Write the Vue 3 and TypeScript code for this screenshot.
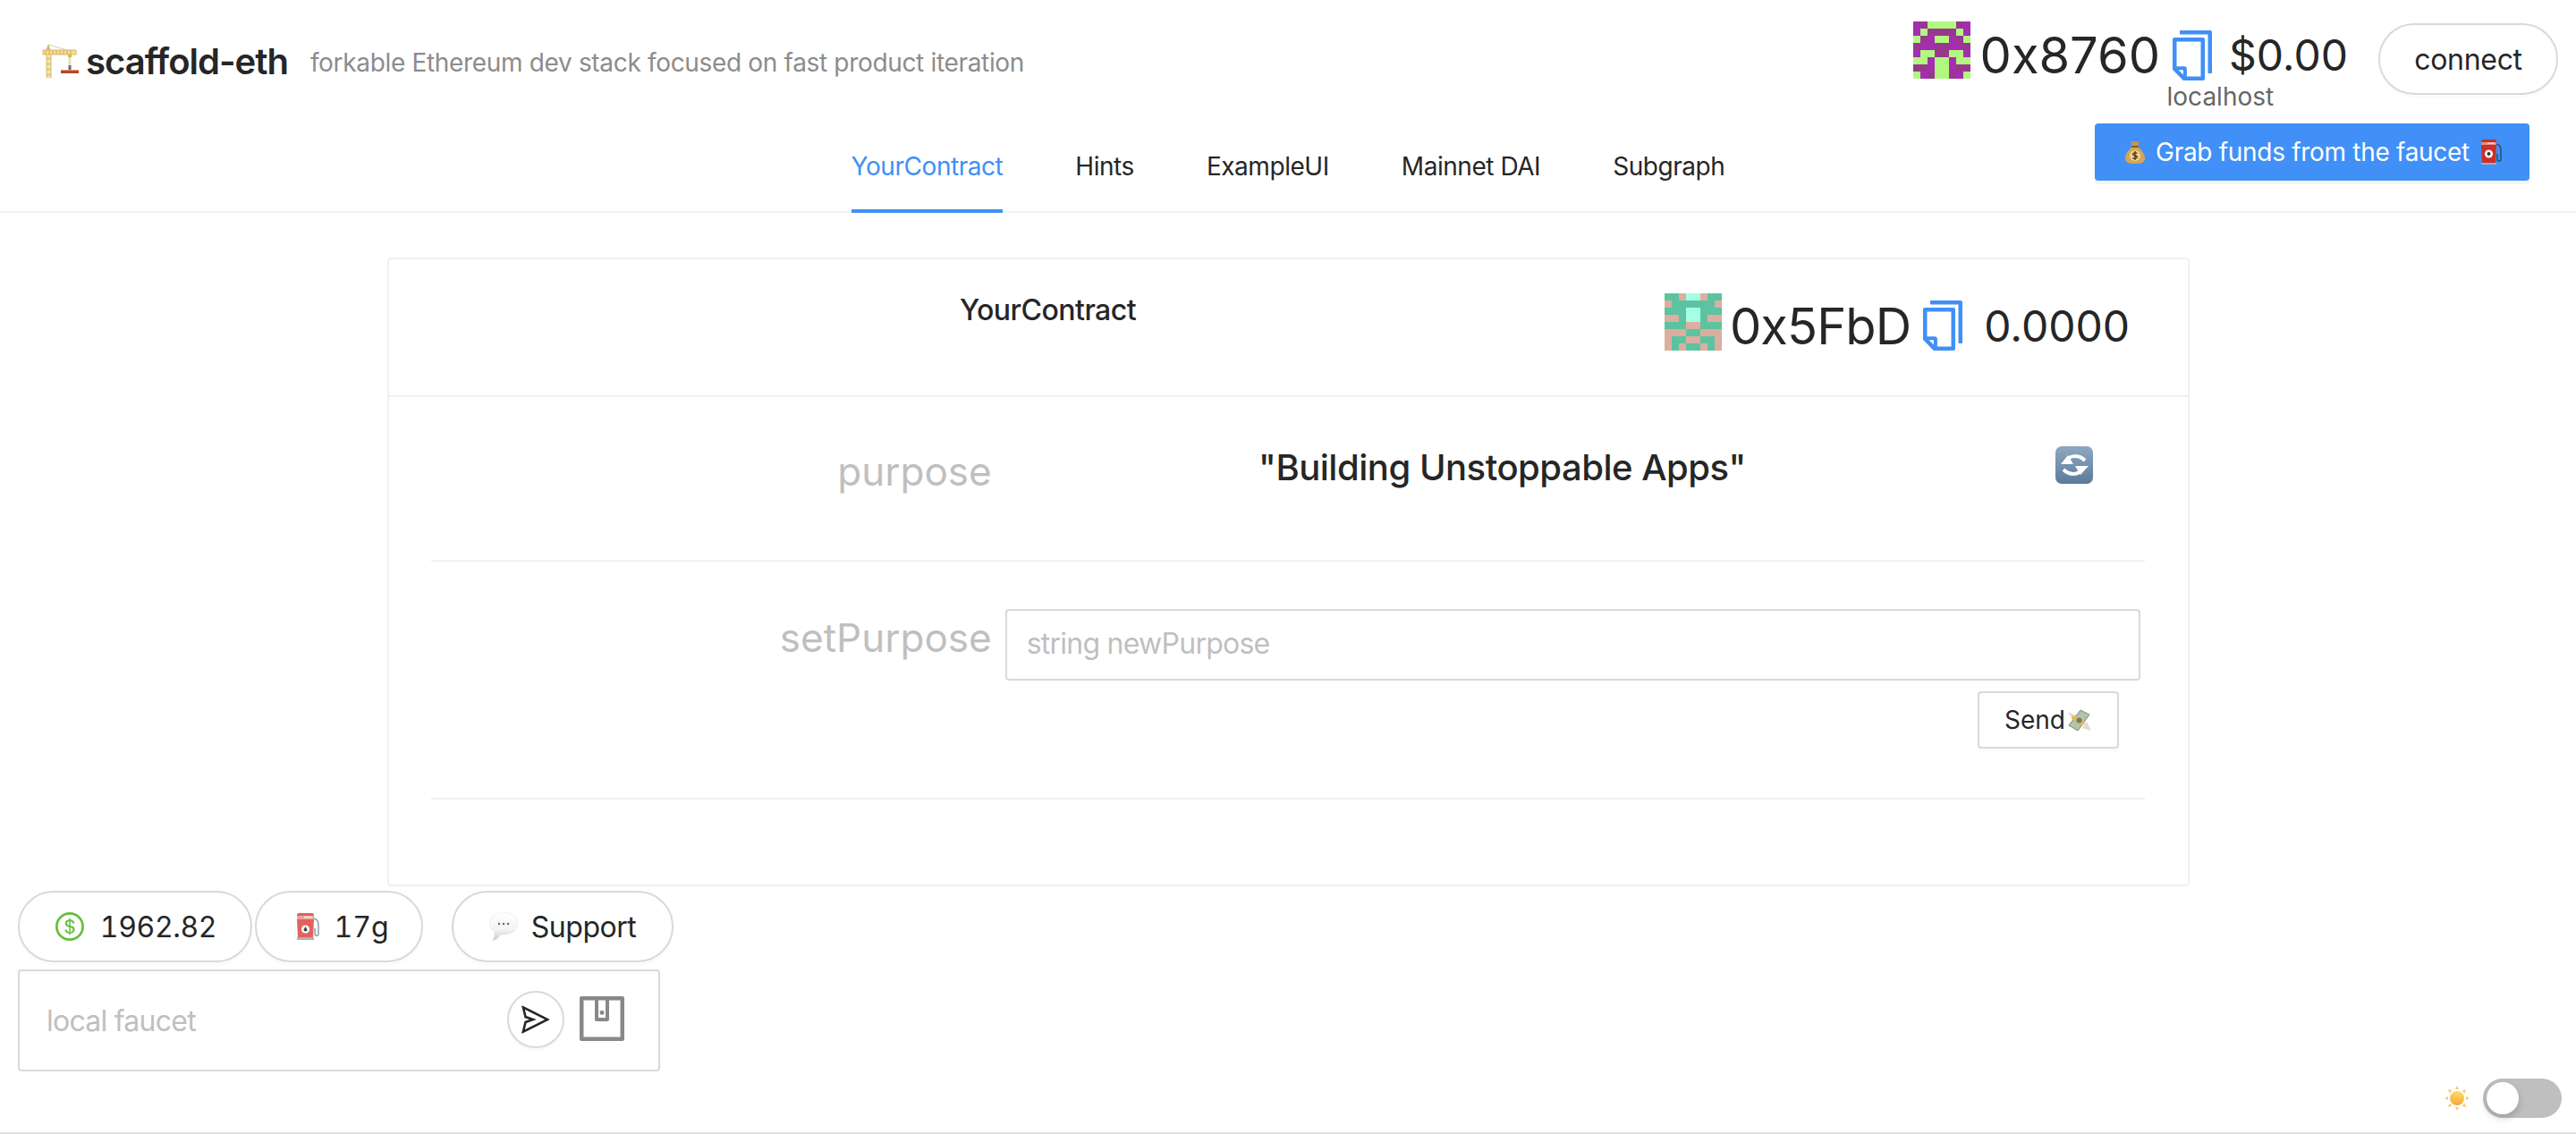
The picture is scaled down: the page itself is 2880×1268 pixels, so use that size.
<script setup lang="ts">
const tabs: string[] = ['YourContract', 'Hints', 'ExampleUI', 'Mainnet DAI', 'Subgraph']

const copyPath =
  'M832 64H296c-4.4 0-8 3.6-8 8v56c0 4.4 3.6 8 8 8h496v688c0 4.4 3.6 8 8 8h56c4.4 0 8-3.6 8-8V96c0-17.7-14.3-32-32-32zM704 192H192c-17.7 0-32 14.3-32 32v530.7c0 8.5 3.4 16.6 9.4 22.6l173.3 173.3c2.2 2.2 4.7 4 7.4 5.5v1.9h4.2c3.5 1.3 7.2 2 11 2H704c17.7 0 32-14.3 32-32V224c0-17.7-14.3-32-32-32zM350 856.2L263.9 770H350v86.2zM664 888H414V746c0-22.1-17.9-40-40-40H232V264h432v624z'

const walletColors: Record<string, string> = { A: '#a52db0', B: '#97388e', G: '#b2f880' }
const walletRows = ['ABGGGGBA', 'AGBBBBGA', 'GBAGGABG', 'BAABBAAB', 'AGGBBGGA', 'GGAGGAGG', 'BBAGGABB', 'GABGGBAG']
const contractColors: Record<string, string> = { G: '#5cc3a1', P: '#dbaea0', C: '#a4ffe4' }
const contractRows = ['GGPCCPGG', 'PGGGGGGP', 'GGGCCGGG', 'PPGCCGPP', 'GGGPPGGG', 'PPPGGPPP', 'PGGPPGGP', 'PGPGGPGP']

function cells(rows: string[], colors: Record<string, string>): string[] {
  return rows.join('').split('').map((k) => colors[k])
}
const walletCells = cells(walletRows, walletColors)
const contractCells = cells(contractRows, contractColors)
</script>

<template>
  <div class="page">
    <div class="top">
      <div class="top-row">
        <div class="brand">
          <svg class="crane" viewBox="0 0 41 38" width="41" height="38">
            <path d="M7 1 31 8" stroke="#cfcabd" stroke-width="1" fill="none" />
            <path d="M7 0l2.500 7h-5z" fill="#d8b45e" />
            <rect x="5" y="7" width="5" height="31" fill="#f6e6b4" stroke="#e0bf6c" stroke-width="1" />
            <path d="M5 15l5 3M10 15l-5 3M5 21l5 3M10 21l-5 3M5 27l5 3M10 27l-5 3M5 33l5 3M10 33l-5 3" stroke="#dcb862" stroke-width="1" />
            <rect x="1" y="7" width="37" height="5" fill="#f3dc96" stroke="#dfbc68" stroke-width="1" />
            <path d="M4 7v5M8 7v5M12 7v5M16 7v5M20 7v5M24 7v5M28 7v5M32 7v5" stroke="#d6ae58" stroke-width="1" />
            <rect x="29" y="12" width="4" height="3" fill="#d8b45e" />
            <path d="M31 15v11" stroke="#e6e0b8" stroke-width="3" />
            <rect x="29.500" y="24" width="3" height="5" fill="#6b6b6b" />
            <rect x="21" y="29" width="20" height="4" fill="#b4472c" />
            <rect x="21" y="29" width="20" height="1" fill="#e3957f" />
          </svg>
          <span class="title">scaffold-eth</span>
          <span class="subtitle">forkable Ethereum dev stack focused on fast product iteration</span>
        </div>
        <div class="account">
          <div class="blockie">
            <i v-for="(c, i) in walletCells" :key="i" :style="{ background: c }"></i>
          </div>
          <span class="address">0x8760</span>
          <svg class="copy" viewBox="64 64 896 896" width="56" height="56"><path :d="copyPath" /></svg>
          <span class="usd">$0.00</span>
          <button class="pill connect">connect</button>
          <span class="network">localhost</span>
          <button class="faucet-hint">
            <svg viewBox="0 0 22 26" width="22" height="26">
              <path d="M6 1c2 1 3 0 5 .500s3 0 5-.500l-2 6H8z" fill="#c8964a" />
              <path d="M8 7h6c5 4 8 9 8 13 0 4-3 6-11 6S0 24 0 20c0-4 3-9 8-13z" fill="#d6a556" />
              <rect x="7.500" y="6" width="7" height="2" fill="#7d5824" />
              <circle cx="11" cy="17" r="6" fill="#efd28c" />
              <path d="M13.500 14.500c-1-1-5-1-5 1s5 1 5 3-4 2-5 1M11 12v10" stroke="#4a3818" stroke-width="1.300" fill="none" />
            </svg>
            <span class="hint-text">Grab funds from the faucet</span>
            <svg viewBox="0 0 25 28" width="25" height="28">
              <path d="M1 2c0-1 1-2 2-2h13c1 0 2 1 2 2v4l-1 20H2L1 6z" fill="#c9302b" />
              <rect x="1" y="3" width="17" height="3" fill="#e98a80" />
              <rect x="8" y="3.500" width="8" height="1.500" fill="#f6d5cf" />
              <rect x="1" y="26" width="17" height="2" fill="#b0a8a8" />
              <circle cx="9.500" cy="16" r="4.500" fill="#fff" />
              <circle cx="9.500" cy="16" r="2" fill="#40302e" />
              <path d="M18 5c4 1 5 3 5 7v10c0 3-4 3-4 0v-6" stroke="#24506e" stroke-width="1.500" fill="none" />
            </svg>
          </button>
        </div>
      </div>
      <nav class="tabs">
        <a v-for="(t, i) in tabs" :key="t" class="tab" :class="{ active: i === 0 }">{{ t }}</a>
      </nav>
    </div>

    <section class="card">
      <header class="card-head">
        <span class="card-title">YourContract</span>
        <div class="contract-account">
          <div class="blockie">
            <i v-for="(c, i) in contractCells" :key="i" :style="{ background: c }"></i>
          </div>
          <span class="address">0x5FbD</span>
          <svg class="copy" viewBox="64 64 896 896" width="56" height="56"><path :d="copyPath" /></svg>
          <span class="balance">0.0000</span>
        </div>
      </header>
      <div class="card-body">
        <div class="row read-row">
          <span class="label">purpose</span>
          <span class="value">"Building Unstoppable Apps"</span>
          <span class="refresh">
            <svg viewBox="0 0 42 42" width="42" height="42">
              <defs>
                <linearGradient id="refreshBg" x1="0" y1="0" x2="0" y2="1">
                  <stop offset="0" stop-color="#8ea8c2" />
                  <stop offset="1" stop-color="#5c7b99" />
                </linearGradient>
              </defs>
              <rect width="42" height="42" rx="7" fill="url(#refreshBg)" />
              <path d="M13 16c3-6 13-7 20 0" stroke="#fff" stroke-width="4" fill="none" />
              <path d="M6 20l8-10 6 10z" fill="#fff" />
              <path d="M29 26c-3 6-13 7-20 0" stroke="#fff" stroke-width="4" fill="none" />
              <path d="M37 22l-9 10-6-10z" fill="#fff" />
            </svg>
          </span>
        </div>
        <div class="row write-row">
          <span class="label">setPurpose</span>
          <div class="form">
            <input class="text-input" placeholder="string newPurpose" />
            <button class="send">
              Send<svg viewBox="0 0 28 25" width="28" height="25">
                <path d="M1 3l9 4-3 6z" fill="#dcdcd2" />
                <path d="M27 24l-10-3 5-7z" fill="#dcdcd2" />
                <path d="M15 1l10 5-13 18L2 18z" fill="#b3c2a8" />
                <path d="M15 1l10 5-13 18L2 18z" fill="none" stroke="#7d8a72" stroke-width="1" />
                <path d="M7 7l13 8-2.500 3.400L4.500 10.400z" fill="#e6b94e" />
                <circle cx="13.500" cy="12.500" r="3" fill="#6f7f63" />
              </svg>
            </button>
          </div>
        </div>
      </div>
    </section>

    <aside class="tools">
      <div class="pills">
        <button class="pill price">
          <svg class="dollar" viewBox="64 64 896 896" width="32" height="32">
            <path d="M512 64C264.6 64 64 264.6 64 512s200.6 448 448 448 448-200.6 448-448S759.4 64 512 64zm0 820c-205.4 0-372-166.6-372-372s166.6-372 372-372 372 166.6 372 372-166.6 372-372 372zm47.7-395.2l-25.4-5.9V348.6c38 5.2 61.5 29 65.5 58.2.5 4 3.9 6.9 7.9 6.9h44.9c4.7 0 8.4-4.1 8-8.8-6.1-62.3-57.4-102.3-125.9-109.2V263c0-4.4-3.6-8-8-8h-28.1c-4.4 0-8 3.6-8 8v33c-70.8 6.9-126.2 46-126.2 119 0 67.6 49.8 100.2 102.1 112.7l24.7 6.3v142.7c-44.2-5.9-69-29.5-74.1-61.3-.6-3.8-4-6.6-7.9-6.6H363c-4.7 0-8.4 4-8 8.7 4.5 55 46.2 105.6 135.2 112.1V761c0 4.4 3.6 8 8 8h28.4c4.4 0 8-3.6 8-8.1l-.2-31.7c78.3-6.9 134.3-48.8 134.3-124-.1-69.4-44.2-100.4-109-116.4zm-68.6-16.2c-5.6-1.6-10.3-3.1-15-5-33.8-12.2-49.5-31.9-49.5-57.3 0-36.3 27.5-57 64.5-61.7v124zM534.3 677V543.3c3.1.9 5.9 1.6 8.8 2.2 47.3 14.4 63.2 34.4 63.2 65.1 0 39.1-29.4 62.6-72 66.4z" />
          </svg>
          <span class="num price-num">1962.82</span>
        </button>
        <button class="pill gas">
          <svg viewBox="0 0 26 30" width="26" height="30">
            <path d="M1 2c0-1 1-2 2-2h15c1 0 2 1 2 2v4l-1 22H2L1 6z" fill="#e0625e" />
            <rect x="1" y="3" width="19" height="4" fill="#eda49c" />
            <rect x="9" y="3.500" width="9" height="2" fill="#f8dcd8" />
            <rect x="1" y="27" width="19" height="3" fill="#b5b0b0" />
            <circle cx="10.500" cy="18" r="4.500" fill="#fff" />
            <path d="M10.500 15l2 3.500a2 2 0 1 1-4 0z" fill="#444" />
            <path d="M20 6c4 1 5 3 5 7v10c0 3-4 3-4 0v-6" stroke="#8f9aa3" stroke-width="1.500" fill="none" />
          </svg>
          <span class="num">17g</span>
        </button>
        <button class="pill support">
          <svg viewBox="0 0 32 32" width="32" height="32">
            <defs>
              <linearGradient id="bubbleBg" x1="0" y1="0" x2="0" y2="1">
                <stop offset="0" stop-color="#ffffff" />
                <stop offset="0.6" stop-color="#f4f4f4" />
                <stop offset="1" stop-color="#c9c9c9" />
              </linearGradient>
            </defs>
            <path d="M16 0c9 0 16 5.500 16 12.500S25 25 16 25c-1 0-2 0-3-.2C11 28 8 31 3 32c2-2 3-5 3-10-4-2.500-6-5.500-6-9.500C0 5.500 7 0 16 0z" fill="url(#bubbleBg)" stroke="#dedede" stroke-width="0.500" />
            <circle cx="11" cy="13" r="1.200" fill="#666" />
            <circle cx="16" cy="13" r="1.200" fill="#666" />
            <circle cx="21" cy="13" r="1.200" fill="#666" />
          </svg>
          <span class="support-text">Support</span>
        </button>
      </div>
      <div class="faucet">
        <input class="faucet-input" placeholder="local faucet" />
        <button class="round-send">
          <svg viewBox="64 64 896 896" width="32" height="32">
            <path d="M931.4 498.9L94.9 79.5c-3.4-1.7-7.3-2.1-11-1.2-8.5 2.1-13.8 10.7-11.7 19.3l86.2 352.2c1.3 5.3 5.2 9.6 10.4 11.3l147.7 50.7-147.6 50.7c-5.2 1.8-9.1 6-10.3 11.3L72.2 926.5c-.9 3.7-.5 7.6 1.2 10.9 3.9 7.9 13.5 11.1 21.5 7.2l836.5-417c3.1-1.5 5.6-4.1 7.2-7.1 3.9-8 .7-17.6-7.2-21.6zM170.8 826.3l50.3-205.6 295.2-101.3c2.3-.8 4.2-2.6 5-5 1.4-4.2-.8-8.7-5-10.2L221.1 403 171 198.2l628 314.9-628.2 313.2z" />
          </svg>
        </button>
        <svg class="wallet" viewBox="64 64 896 896" width="56" height="56">
          <path d="M880 112H144c-17.7 0-32 14.3-32 32v736c0 17.7 14.3 32 32 32h736c17.7 0 32-14.3 32-32V144c0-17.7-14.3-32-32-32zm-40 464H528V448h312v128zm0 264H184V184h656v200H496c-17.7 0-32 14.3-32 32v192c0 17.7 14.3 32 32 32h344v200zM580 512a40 40 0 1 0 80 0 40 40 0 1 0-80 0z" />
        </svg>
      </div>
    </aside>

    <div class="theme">
      <svg viewBox="0 0 28 28" width="28" height="28">
        <defs>
          <linearGradient id="sunBg" x1="0" y1="0" x2="0" y2="1">
            <stop offset="0" stop-color="#ffd968" />
            <stop offset="1" stop-color="#f5a93a" />
          </linearGradient>
        </defs>
        <path d="M14 0l2 4h-4zM14 28l-2-4h4zM0 14l4-2v4zM28 14l-4 2v-4zM4 4l4.500 1.500L5.500 8.500zM24 24l-4.500-1.500 3-3zM24 4l-1.500 4.500-3-3zM4 24l1.500-4.500 3 3z" fill="#f9c872" />
        <circle cx="14" cy="14" r="8" fill="url(#sunBg)" />
      </svg>
      <span class="switch"><span class="knob"></span></span>
    </div>
  </div>
</template>

<style>
html, body { margin: 0; padding: 0; background: #fff; }
</style>

<style scoped>
.page {
  position: relative;
  box-sizing: border-box;
  width: 2880px;
  height: 1268px;
  overflow: hidden;
  background: #fff;
  border-bottom: 2px solid #dfdfe3;
  font-family: Inter, "Liberation Sans", sans-serif;
  color: #262626;
  font-size: 28px;
}
button, input { font-family: inherit; color: inherit; }
.top {
  box-sizing: border-box;
  height: 238px;
  border-bottom: 2px solid #f0f0f0;
}
.top-row {
  display: flex;
  justify-content: space-between;
  height: 136px;
}
.brand {
  display: flex;
  align-items: center;
  height: 38px;
  margin: 49px 0 0 47px;
}
.crane { flex: none; }
.title {
  margin-left: 8px;
  padding-top: 2px;
  font-size: 40px;
  font-weight: 600;
  line-height: 48px;
  letter-spacing: -1px;
}
.subtitle {
  margin-left: 25px;
  padding-top: 4px;
  font-size: 28px;
  line-height: 40px;
  letter-spacing: -0.33px;
  color: #8c8c8c;
}
.account {
  position: relative;
  display: flex;
  align-items: flex-start;
  margin: 24px 20px 0 0;
}
.blockie {
  display: grid;
  grid-template-columns: repeat(8, 8px);
  grid-auto-rows: 8px;
  flex: none;
  width: 64px;
  height: 64px;
}
.blockie i { display: block; }
.address {
  margin-left: 11px;
  padding-top: 2px;
  font-size: 56px;
  line-height: 72px;
}
.copy { flex: none; margin: 10px 0 0 8px; fill: #4090f7; }
.usd {
  margin-left: 13px;
  padding-top: 2px;
  font-size: 48px;
  line-height: 72px;
}
.pill {
  display: inline-flex;
  align-items: center;
  justify-content: center;
  box-sizing: border-box;
  height: 80px;
  padding: 0 40px;
  background: #fff;
  border: 2px solid #d9d9d9;
  border-radius: 40px;
  box-shadow: 0 4px 0 rgba(0, 0, 0, 0.015);
  font-size: 32px;
  white-space: nowrap;
}
.connect { margin: 2px 0 0 34px; width: 201px; padding: 0; letter-spacing: -0.3px; }
.network {
  position: absolute;
  top: 67px;
  left: 284px;
  font-size: 28px;
  line-height: 34px;
  color: #666;
}
.faucet-hint {
  position: absolute;
  top: 114px;
  right: 32px;
  display: flex;
  align-items: center;
  justify-content: center;
  gap: 12px;
  box-sizing: border-box;
  width: 486px;
  height: 64px;
  padding: 0 0 0 4px;
  background: #4090f7;
  border: none;
  border-radius: 4px;
  box-shadow: 0 4px 0 rgba(0, 0, 0, 0.045);
  color: #fff;
  font-size: 28px;
  white-space: nowrap;
}
.hint-text { letter-spacing: -0.3px; }
.tabs {
  display: flex;
  justify-content: center;
  gap: 81px;
  height: 102px;
}
.tab {
  box-sizing: border-box;
  height: 102px;
  padding-top: 32px;
  font-size: 28px;
  line-height: 36px;
  letter-spacing: -0.45px;
  border-bottom: 4px solid transparent;
  color: #262626;
}
.tab.active { color: #4090f7; border-bottom-color: #4090f7; }
.card {
  box-sizing: border-box;
  width: 2015px;
  height: 703px;
  margin: 50px 0 0 433px;
  border: 2px solid #f0f0f0;
  border-radius: 4px;
}
.card-head {
  display: flex;
  justify-content: space-between;
  align-items: flex-start;
  box-sizing: border-box;
  height: 154px;
  padding: 38px 65px 0 638px;
  border-bottom: 2px solid #f0f0f0;
}
.card-title {
  margin-top: -2px;
  font-size: 32px;
  font-weight: 500;
  line-height: 42px;
  letter-spacing: -0.5px;
}
.contract-account { display: flex; align-items: flex-start; }
.balance {
  margin-left: 18px;
  font-size: 48px;
  line-height: 74px;
}
.contract-account .address {
  margin-left: 9px;
  padding-top: 0;
  line-height: 74px;
  letter-spacing: -0.9px;
}
.contract-account .copy { margin: 8px 0 0 8px; }
.card-body { padding: 0 48px 0 47px; }
.row {
  display: grid;
  grid-template-columns: 8fr 16fr;
  box-sizing: border-box;
  border-bottom: 2px solid #f0f0f0;
}
.read-row {
  grid-template-columns: 8fr 14fr 2fr;
  height: 184px;
}
.write-row { height: 266px; }
.label {
  padding-right: 12px;
  text-align: right;
  font-size: 44px;
  line-height: 60px;
  color: #bfbfbf;
}
.read-row .label { padding-top: 53px; }
.write-row .label { padding-top: 55px; }
.value {
  padding-top: 50px;
  text-align: center;
  font-size: 40px;
  font-weight: 500;
  line-height: 58px;
  letter-spacing: -0.48px;
}
.refresh { display: flex; justify-content: center; padding: 55px 0 0 2px; align-items: flex-start; }
.form {
  display: flex;
  flex-direction: column;
  align-items: flex-end;
  padding: 53px 5px 0 3px;
}
.text-input {
  box-sizing: border-box;
  width: 100%;
  height: 80px;
  padding: 0 22px 4px;
  background: #fff;
  border: 2px solid #d9d9d9;
  border-radius: 4px;
  font-size: 32px;
  letter-spacing: -0.75px;
  outline: none;
}
.text-input::placeholder, .faucet-input::placeholder { color: #bfbfbf; opacity: 1; }
.send {
  display: flex;
  align-items: center;
  justify-content: center;
  box-sizing: border-box;
  width: 158px;
  height: 64px;
  margin: 12px 24px 0 0;
  padding: 0;
  background: #fff;
  border: 2px solid #d9d9d9;
  border-radius: 4px;
  box-shadow: 0 4px 0 rgba(0, 0, 0, 0.015);
  font-size: 28px;
}
.send svg { margin-left: 2px; }
.tools {
  display: flex;
  flex-direction: column;
  width: 733px;
  margin: 5px 0 0 20px;
}
.pills { display: flex; }
.pills svg { flex: none; }
.num { font-variant-numeric: tabular-nums; }
.price-num { letter-spacing: -0.4px; }
.price { width: 262px; padding: 0 0 0 2px; gap: 18px; }
.dollar { fill: #65bf3c; }
.gas { width: 188px; margin-left: 3px; padding: 0 0 0 8px; gap: 16px; }
.support { width: 248px; margin-left: 32px; padding: 0; gap: 15px; }
.support-text { letter-spacing: -0.5px; }
.faucet {
  display: flex;
  align-items: center;
  box-sizing: border-box;
  width: 718px;
  height: 114px;
  margin-top: 8px;
  padding: 0 38px 0 30px;
  background: #fff;
  border: 2px solid #d9d9d9;
  border-radius: 4px;
}
.faucet-input {
  flex: 1;
  min-width: 0;
  padding: 0;
  border: none;
  outline: none;
  background: transparent;
  font-size: 32px;
  letter-spacing: -0.75px;
}
.round-send {
  display: flex;
  align-items: center;
  justify-content: center;
  flex: none;
  box-sizing: border-box;
  width: 64px;
  height: 64px;
  margin-top: -2px;
  padding: 0;
  background: #fff;
  border: 2px solid #d9d9d9;
  border-radius: 50%;
  box-shadow: 0 4px 0 rgba(0, 0, 0, 0.015);
}
.round-send svg { fill: #262626; }
.wallet {
  flex: none;
  margin: -4px -3px 0 14px;
  fill: #888;
  transform: rotate(-90deg);
}
.theme {
  position: absolute;
  right: 16px;
  bottom: 16px;
  display: flex;
  align-items: center;
  gap: 15px;
}
.switch {
  position: relative;
  display: block;
  width: 88px;
  height: 44px;
  border-radius: 22px;
  background: #bfbfbf;
}
.knob {
  position: absolute;
  top: 4px;
  left: 4px;
  width: 36px;
  height: 36px;
  border-radius: 50%;
  background: #fff;
  box-shadow: 0 4px 8px rgba(0, 35, 11, 0.2);
}
</style>
